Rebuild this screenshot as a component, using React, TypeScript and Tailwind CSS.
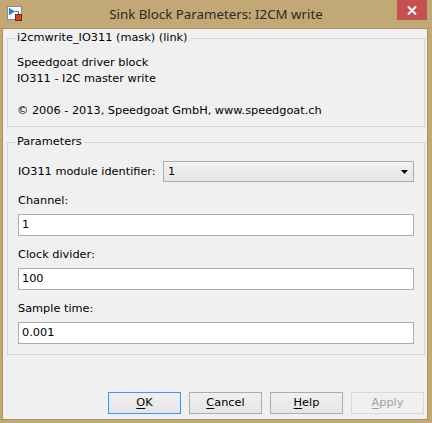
import React from "react";

const ui = "font-['DejaVu_Sans',sans-serif] text-[11.3px] leading-[16px] text-black";

function BlockIcon() {
  return (
    <svg width="16" height="16" viewBox="0 0 16 16">
      <rect x="0.5" y="0.5" width="14" height="13" fill="#f7f7f7" stroke="#8c8c8c" />
      <path d="M3 2.5 L8 5.5 L3 8.5 Z" fill="#2f78d0" />
      <path d="M2.5 2 V9" stroke="#2f78d0" strokeWidth="1" />
      <path d="M8 5.5 H11.5 V8.5" stroke="#2f78d0" strokeWidth="1" fill="none" />
      <rect x="8.5" y="8.5" width="6" height="6" fill="#d8431b" stroke="#7a2a12" />
    </svg>
  );
}

function Btn({ u, rest, primary, disabled }: { u: string; rest: string; primary?: boolean; disabled?: boolean }) {
  return (
    <button
      className={
        "w-[73px] h-[22px] border flex items-center justify-center " +
        (primary
          ? "border-[#3399ff] bg-gradient-to-b from-[#f0f0f0] to-[#e5e5e5] text-black"
          : disabled
          ? "border-[#d9d9d9] bg-[#f0f0f0] text-[#a0a0a0]"
          : "border-[#acacac] bg-gradient-to-b from-[#f0f0f0] to-[#e5e5e5] text-black")
      }
    >
      <span className="underline underline-offset-[2px]">{u}</span>
      {rest}
    </button>
  );
}

function Field({ label, value }: { label: string; value: string }) {
  return (
    <>
      <div className="mt-[11px]">{label}</div>
      <div className="mt-[5px] h-[22px] w-[396px] bg-white border border-[#abadb3] px-[3px] flex items-center">
        {value}
      </div>
    </>
  );
}

export default function App() {
  return (
    <div className={"w-[432px] h-[423px] bg-[#c1a874] flex flex-col " + ui}>
      {/* title bar */}
      <div className="h-[28px] relative flex items-center justify-center">
        <div className="absolute left-[7px] top-[6px]">
          <BlockIcon />
        </div>
        <span className="font-['Noto_Sans',sans-serif] text-[13.3px] text-[#2b2b2b] -mt-[1px]">
          Sink Block Parameters: I2CM write
        </span>
        <div className="absolute right-[5px] top-0 w-[30px] h-[20px] bg-[#c75050] flex items-center justify-center">
          <svg width="10" height="9" viewBox="0 0 10 9">
            <path d="M1 0.5 L9 8.5 M9 0.5 L1 8.5" stroke="#fff" strokeWidth="2" />
          </svg>
        </div>
      </div>

      {/* client */}
      <div className="flex-1 ml-[2px] mr-[4px] mb-[3px] border border-[#a8915f] bg-[#f0f0f0] flex flex-col">
        <div className="relative mt-[9px] ml-[4px] w-[418px] border border-[#d5d5d5] pl-[9px] pt-[16px] pb-[7px]">
          <span className="absolute left-[7px] -top-[9px] px-[2px] bg-[#f0f0f0]">
            i2cmwrite_IO311 (mask) (link)
          </span>
          <div>Speedgoat driver block</div>
          <div>IO311 - I2C master write</div>
          <div className="h-[16px]" />
          <div>© 2006 - 2013, Speedgoat GmbH, www.speedgoat.ch</div>
        </div>

        <div className="relative mt-[15px] ml-[4px] w-[418px] border border-[#d5d5d5] px-[10px] pt-[18px] pb-[10px]">
          <span className="absolute left-[7px] -top-[9px] px-[2px] bg-[#f0f0f0]">Parameters</span>
          <div className="flex items-center">
            <div className="w-[145px]">IO311 module identifier:</div>
            <div className="flex-1 h-[21px] border border-[#acacac] bg-gradient-to-b from-[#f2f2f2] to-[#e5e5e5] flex items-center justify-between pl-[4px] pr-[5px]">
              <span>1</span>
              <svg width="7" height="4" viewBox="0 0 7 4">
                <path d="M0 0 H7 L3.5 4 Z" fill="#000" />
              </svg>
            </div>
          </div>
          <Field label="Channel:" value="1" />
          <Field label="Clock divider:" value="100" />
          <Field label="Sample time:" value="0.001" />
        </div>

        <div className="flex-1" />
        <div className="flex justify-end gap-[8px] pr-[3px] pb-[5px]">
          <Btn u="O" rest="K" primary />
          <Btn u="C" rest="ancel" />
          <Btn u="H" rest="elp" />
          <Btn u="A" rest="pply" disabled />
        </div>
      </div>
    </div>
  );
}
